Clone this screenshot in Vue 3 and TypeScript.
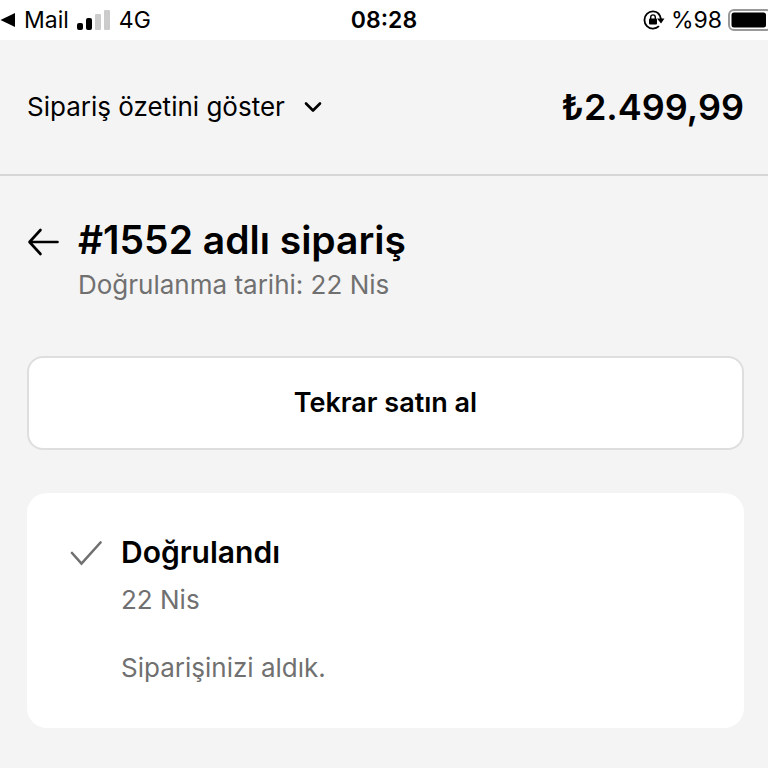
<script setup lang="ts">
import { ref } from 'vue'

interface OrderEvent {
  title: string
  date: string
  message: string
}

const total = '₺2.499,99'
const orderTitle = '#1552 adlı sipariş'
const events: OrderEvent[] = [
  { title: 'Doğrulandı', date: '22 Nis', message: 'Siparişinizi aldık.' },
]
const expanded = ref(false)
</script>

<template>
  <div class="page">
    <div class="status">
      <div class="status-left">
        <svg width="16" height="16" viewBox="0 0 16 16" aria-hidden="true">
          <path d="M.5 8 15 1v14z" fill="#000" />
        </svg>
        <span>Mail</span>
        <svg width="34" height="22" viewBox="0 0 34 22" aria-hidden="true">
          <rect x="0" y="14" width="6" height="7" rx="2" fill="#000" />
          <rect x="9" y="9" width="6" height="12" rx="2" fill="#000" />
          <rect x="18" y="5" width="6" height="16" rx="1" fill="#ccc" />
          <rect x="27" y="1" width="6" height="20" rx="1" fill="#ccc" />
        </svg>
        <span>4G</span>
      </div>
      <div class="clock">08:28</div>
      <div class="status-right">
        <svg width="22" height="20" viewBox="0 0 22 20" fill="none" aria-hidden="true">
          <path d="M16 3.8A8.6 8.6 0 1 0 16 16.2" stroke="#000" stroke-width="1.8" />
          <path d="M15 3.2A8.6 8.6 0 0 1 18 9" stroke="#000" stroke-width="1.8" />
          <path d="M14 8.5h7.5L18 13.5z" fill="#000" />
          <rect x="6" y="8.5" width="8" height="6" rx="1" fill="#000" />
          <path d="M7.7 9V7.2a2.3 2.3 0 0 1 4.6 0V9" stroke="#000" stroke-width="1.4" />
        </svg>
        <span>%98</span>
        <svg width="40" height="22" viewBox="0 0 40 22" fill="none" aria-hidden="true">
          <rect x="1" y="1" width="42" height="20" rx="5" stroke="#999" stroke-width="2" />
          <rect x="3.5" y="3.5" width="34.5" height="15" rx="2.5" fill="#000" />
        </svg>
      </div>
    </div>

    <header class="summary">
      <button class="toggle" type="button" :aria-expanded="expanded" @click="expanded = !expanded">
        <span>Sipariş özetini göster</span>
        <svg width="18" height="12" viewBox="0 0 18 12" fill="none" aria-hidden="true">
          <path d="M2 2.5 9 9.5 16 2.5" stroke="#000" stroke-width="2.6" stroke-linecap="round" stroke-linejoin="round" />
        </svg>
      </button>
      <strong class="total">{{ total }}</strong>
    </header>

    <main class="content">
      <div class="order">
        <a class="back" href="#" aria-label="Geri">
          <svg width="32" height="28" viewBox="0 0 32 28" fill="none" aria-hidden="true">
            <path d="M30.5 14H3M13.5 2 2.5 14l11 12" stroke="#000" stroke-width="2.6" stroke-linecap="round" stroke-linejoin="round" />
          </svg>
        </a>
        <div>
          <h1>{{ orderTitle }}</h1>
          <p class="muted">Doğrulanma tarihi: 22 Nis</p>
        </div>
      </div>

      <button class="buy" type="button">Tekrar satın al</button>

      <section v-for="event in events" :key="event.title" class="card">
        <svg class="check" width="32" height="26" viewBox="0 0 32 26" fill="none" aria-hidden="true">
          <path d="M2 13 11.5 23.5 30.5 2.5" stroke="#707070" stroke-width="2.6" stroke-linecap="round" />
        </svg>
        <div>
          <h2>{{ event.title }}</h2>
          <p class="muted date">{{ event.date }}</p>
          <p class="muted">{{ event.message }}</p>
        </div>
      </section>
    </main>
  </div>
</template>

<style>
body {
  margin: 0;
  background: #f4f4f4;
}
</style>

<style scoped>
.page {
  min-height: 100vh;
  background: #f4f4f4;
  color: #000;
  font-family: Inter, "Liberation Sans", sans-serif;
  font-size: 26px;
}

.status {
  display: grid;
  grid-template-columns: 1fr auto 1fr;
  align-items: center;
  height: 40px;
  background: #fff;
  font-size: 23px;
}

.status-left,
.status-right {
  display: flex;
  align-items: center;
  gap: 8px;
}

.status-right {
  justify-content: flex-end;
  gap: 6px;
}

.clock {
  font-weight: 600;
}

.summary {
  display: flex;
  align-items: center;
  justify-content: space-between;
  padding: 43px 24px 43px 27px;
  border-bottom: 2px solid #d6d6d6;
  line-height: 48px;
}

.toggle {
  display: flex;
  align-items: center;
  gap: 19px;
  padding: 0;
  border: 0;
  background: none;
  color: inherit;
  font: inherit;
  cursor: pointer;
}

.total {
  font-size: 36px;
  font-weight: 600;
}

.content {
  padding: 39px 24px 40px 27px;
}

.order {
  display: flex;
  gap: 19px;
}

.back {
  display: flex;
  align-items: center;
  height: 54px;
}

h1,
h2,
p {
  margin: 0;
}

h1 {
  font-size: 39px;
  font-weight: 600;
  line-height: 50px;
}

h2 {
  font-size: 30px;
  font-weight: 600;
  line-height: 40px;
}

.muted {
  color: #707070;
  line-height: 40px;
}

.buy {
  display: block;
  width: 100%;
  margin: 51px 0 43px;
  padding: 25px 24px;
  border: 2px solid #dedede;
  border-radius: 16px;
  background: #fff;
  color: inherit;
  font: inherit;
  font-size: 27px;
  font-weight: 600;
  line-height: 40px;
  cursor: pointer;
}

.card {
  display: flex;
  gap: 19px;
  padding: 39px 43px 40px;
  border-radius: 20px;
  background: #fff;
}

.check {
  margin-top: 8px;
}

.date {
  margin: 8px 0 28px;
}
</style>
